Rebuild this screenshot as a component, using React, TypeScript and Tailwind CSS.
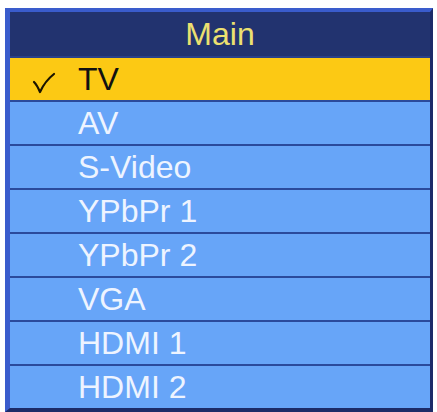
import React from "react";

const sources = ["TV", "AV", "S-Video", "YPbPr 1", "YPbPr 2", "VGA", "HDMI 1", "HDMI 2"];
const selected = "TV";

function Check() {
  return (
    <svg width="24" height="22" viewBox="0 0 24 22" className="absolute left-[22px] top-[14px]">
      <path d="M2 10 Q5 13 8 20 Q13 9 22 2" fill="none" stroke="#1a1400" strokeWidth="2.2" strokeLinecap="round" strokeLinejoin="round" />
    </svg>
  );
}

export default function App() {
  return (
    <div className="w-[437px] h-[412px] bg-white pt-[8px] pl-[5px]" style={{ fontFamily: '"Liberation Sans", Arial, sans-serif' }}>
      <div className="w-[428px] h-[404px] border-l-[5px] border-t-[4px] border-r-[3px] border-b-[4px] border-l-[#3a5ccc] border-t-[#3a5ccc] border-r-[#1c2b68] border-b-[#1c2b68] flex flex-col">
        <div className="h-[44px] bg-[#22336f] flex items-center justify-center text-[32px] leading-none text-[#ece070]">
          Main
        </div>
        {sources.map((s) => {
          const on = s === selected;
          return (
            <div
              key={s}
              className={
                on
                  ? "relative h-[44px] border-t-[2px] border-[#2a4189] bg-[#fcc914] text-[#111] flex items-center pl-[68px] text-[32px] leading-none"
                  : "relative h-[44px] border-t-[2px] border-[#2a4a9c] bg-[#67a5f8] text-[#eef4ff] flex items-center pl-[68px] text-[32px] leading-none"
              }
            >
              {on && <Check />}
              {s}
            </div>
          );
        })}
      </div>
    </div>
  );
}
